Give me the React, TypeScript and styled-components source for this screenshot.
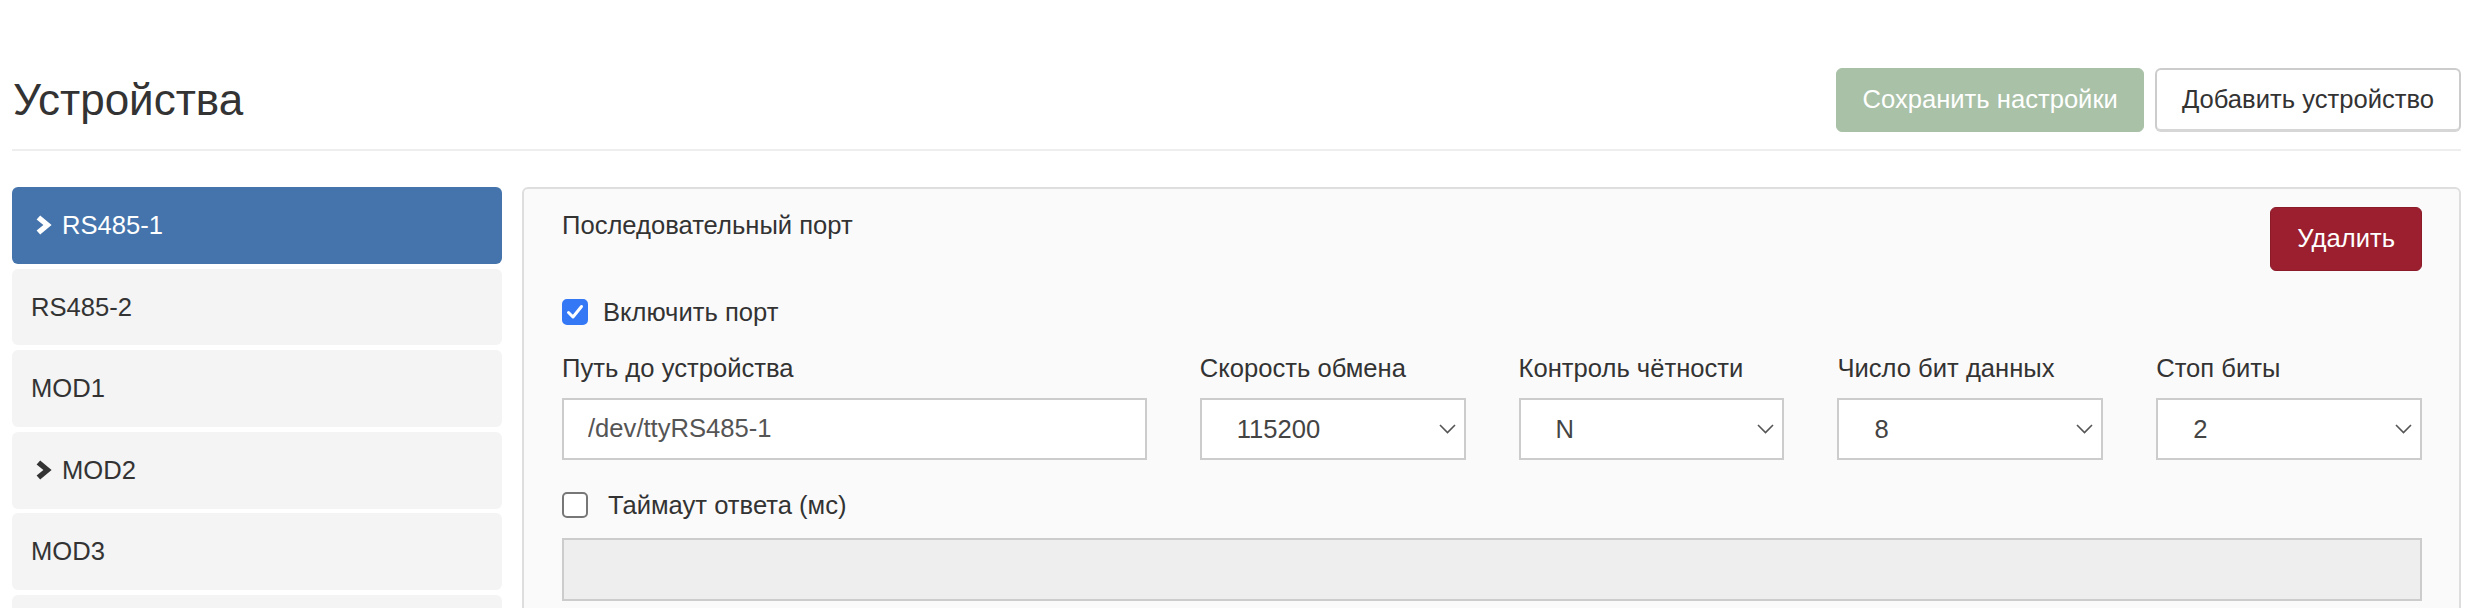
import React from "react";
import styled, { createGlobalStyle, css } from "styled-components";

const GlobalStyle = createGlobalStyle`
  html, body { margin: 0; padding: 0; background: #fff; }
  body {
    font-family: "Liberation Sans", Arial, Helvetica, sans-serif;
    font-size: 25.6px;
    line-height: 1.43;
    color: #333;
  }
  * { box-sizing: border-box; }
`;

const Page = styled.div`
  padding: 0 19px 0 12px;
`;

const Header = styled.header`
  display: flex;
  align-items: center;
  justify-content: space-between;
  padding-top: 68px;
  padding-bottom: 17px;
  border-bottom: 2px solid #eee;
`;

const Title = styled.h1`
  margin: 0 0 0 1px;
  font-size: 44px;
  font-weight: 400;
  line-height: 1.1;
  color: #333;
`;

const Actions = styled.div`
  display: flex;
  gap: 11px;
`;

type Variant = "save" | "default" | "danger";

const Button = styled.button<{ $variant: Variant }>`
  height: 64px;
  padding: 0 25px;
  font-family: inherit;
  font-size: 25.6px;
  line-height: 1;
  border-radius: 6px;
  border: 1px solid transparent;
  cursor: pointer;
  ${({ $variant }) =>
    $variant === "save"
      ? css`
          background: #a9c1a7;
          border-color: #a9c1a7;
          color: #fff;
        `
      : $variant === "danger"
      ? css`
          background: #9b1f2f;
          border-color: #8c1b29;
          color: #fff;
          padding: 0 26px;
        `
      : css`
          background: #fff;
          border: 2px solid #ccc;
          border-bottom-width: 3px;
          border-bottom-color: #d6d6d6;
          color: #333;
        `}
`;

const Body = styled.div`
  display: flex;
  align-items: flex-start;
  gap: 20px;
  margin-top: 36px;
`;

const Sidebar = styled.nav`
  width: 490px;
  flex: none;
  display: flex;
  flex-direction: column;
  gap: 4.8px;
`;

const NavItem = styled.div<{ $active?: boolean }>`
  height: 76.8px;
  display: flex;
  align-items: center;
  padding: 0 19px;
  border-radius: 6px;
  background: ${({ $active }) => ($active ? "#4474ab" : "#f4f4f4")};
  color: ${({ $active }) => ($active ? "#fff" : "#333")};
`;

const Chevron = styled.svg`
  width: 16px;
  height: 20px;
  margin: 0 10px 0 5px;
  flex: none;
`;

const Panel = styled.section`
  flex: 1;
  min-width: 0;
  background: #fafafa;
  border: 2px solid #dedede;
  border-radius: 6px;
  padding: 18px 37px 40px 38px;
`;

const PanelHead = styled.div`
  display: flex;
  justify-content: space-between;
  align-items: flex-start;
`;

const PanelTitle = styled.div`
  line-height: 36.6px;
`;

const CheckRow = styled.label<{ $gap: number; $top: number }>`
  display: flex;
  align-items: center;
  gap: ${({ $gap }) => $gap}px;
  margin-top: ${({ $top }) => $top}px;
  line-height: 36.6px;
`;

const CheckBox = styled.span<{ $checked?: boolean }>`
  width: 26px;
  height: 26px;
  flex: none;
  border-radius: 5px;
  display: flex;
  align-items: center;
  justify-content: center;
  ${({ $checked }) =>
    $checked
      ? css`
          background: #3478f6;
          border: 2px solid #3478f6;
        `
      : css`
          background: #fff;
          border: 2px solid #777;
        `}
`;

const Fields = styled.div`
  display: grid;
  grid-template-columns: 2.2fr 1fr 1fr 1fr 1fr;
  column-gap: 53px;
  margin-top: 19px;
`;

const Field = styled.div`
  display: flex;
  flex-direction: column;
  min-width: 0;
`;

const Label = styled.div`
  line-height: 36.6px;
  margin-bottom: 11.5px;
`;

const TextInput = styled.input`
  height: 62.4px;
  width: 100%;
  border: 2px solid #ccc;
  border-radius: 0;
  background: #fff;
  padding: 0 24px;
  font-family: inherit;
  font-size: 25.6px;
  color: #555;
  outline: none;
  &:disabled {
    background: #eee;
  }
`;

const WideInput = styled(TextInput)`
  margin-top: 15px;
  display: block;
`;

const SelectWrap = styled.div`
  position: relative;
  height: 62.4px;
`;

const Select = styled.select`
  appearance: none;
  -webkit-appearance: none;
  width: 100%;
  height: 100%;
  border: 2px solid #ccc;
  border-radius: 0;
  background: #fff;
  padding: 0 40px 0 35px;
  font-family: inherit;
  font-size: 25.6px;
  color: #444;
  outline: none;
`;

const SelectArrow = styled.svg`
  position: absolute;
  right: 10px;
  top: 50%;
  width: 17px;
  height: 10px;
  margin-top: -5px;
  pointer-events: none;
`;

const ChevronIcon = () => (
  <Chevron viewBox="0 0 16 20" aria-hidden>
    <path d="M4.2 0.6 L15.6 10 L4.2 19.4 L0.6 15.6 L7.4 10 L0.6 4.4 Z" fill="currentColor" />
  </Chevron>
);

const CheckMark = () => (
  <svg width="18" height="16" viewBox="0 0 18 16" aria-hidden>
    <path d="M2.5 8.5 L7 13 L15.5 2.5" fill="none" stroke="#fff" strokeWidth="3" strokeLinecap="round" strokeLinejoin="round" />
  </svg>
);

const SelectField = ({ label, value, options }: { label: string; value: string; options: string[] }) => (
  <Field>
    <Label>{label}</Label>
    <SelectWrap>
      <Select defaultValue={value}>
        {options.map((o) => (
          <option key={o} value={o}>
            {o}
          </option>
        ))}
      </Select>
      <SelectArrow viewBox="0 0 17 10" aria-hidden>
        <polyline points="1,1 8.5,8.5 16,1" fill="none" stroke="#555" strokeWidth="1.6" />
      </SelectArrow>
    </SelectWrap>
  </Field>
);

const devices = [
  { name: "RS485-1", active: true, chevron: true },
  { name: "RS485-2" },
  { name: "MOD1" },
  { name: "MOD2", chevron: true },
  { name: "MOD3" },
  { name: "MOD4" },
];

export default function App() {
  return (
    <>
      <GlobalStyle />
      <Page>
        <Header>
          <Title>Устройства</Title>
          <Actions>
            <Button $variant="save">Сохранить настройки</Button>
            <Button $variant="default">Добавить устройство</Button>
          </Actions>
        </Header>
        <Body>
          <Sidebar>
            {devices.map((d) => (
              <NavItem key={d.name} $active={d.active}>
                {d.chevron && <ChevronIcon />}
                {d.name}
              </NavItem>
            ))}
          </Sidebar>
          <Panel>
            <PanelHead>
              <PanelTitle>Последовательный порт</PanelTitle>
              <Button $variant="danger">Удалить</Button>
            </PanelHead>
            <CheckRow $gap={15} $top={23}>
              <CheckBox $checked>
                <CheckMark />
              </CheckBox>
              Включить порт
            </CheckRow>
            <Fields>
              <Field>
                <Label>Путь до устройства</Label>
                <TextInput defaultValue="/dev/ttyRS485-1" />
              </Field>
              <SelectField label="Скорость обмена" value="115200" options={["9600", "19200", "38400", "57600", "115200"]} />
              <SelectField label="Контроль чётности" value="N" options={["N", "E", "O"]} />
              <SelectField label="Число бит данных" value="8" options={["5", "6", "7", "8"]} />
              <SelectField label="Стоп биты" value="2" options={["1", "2"]} />
            </Fields>
            <CheckRow $gap={20} $top={26.7}>
              <CheckBox />
              Таймаут ответа (мс)
            </CheckRow>
            <WideInput disabled />
          </Panel>
        </Body>
      </Page>
    </>
  );
}
